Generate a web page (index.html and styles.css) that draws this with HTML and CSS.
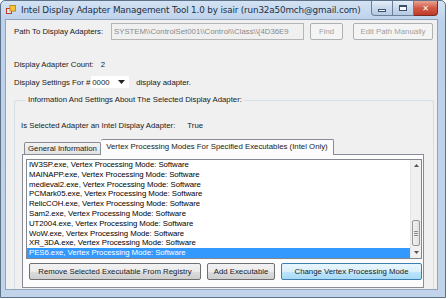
FILE: index.html
```html
<!DOCTYPE html>
<html lang="en">
<head>
  <meta charset="UTF-8" />
  <title>Intel Display Adapter Management Tool</title>
  <link rel="stylesheet" href="styles.css">
</head>
<body>
  <div class="window">
    <div class="titlebar">
      <svg class="appicon" width="10" height="10" viewBox="0 0 10 10">
        <rect x="0.5" y="3.5" width="5" height="5" fill="#e8e8f0" stroke="#c0392b"/>
        <rect x="4" y="0.5" width="5.5" height="5.5" fill="#f5c542" stroke="#c98a10"/>
      </svg>
      <span class="title">Intel Display Adapter Management Tool 1.0 by isair (run32a50mch@gmail.com)</span>
      <div class="controls">
        <div class="ctl min"><span class="dash"></span></div>
        <div class="ctl max"><span class="box"></span></div>
        <div class="ctl close">&#x2715;</div>
      </div>
    </div>

    <div class="client">
      <div class="path-row">
        <span class="path-label">Path To Display Adapters:</span>
        <div class="textbox">SYSTEM\\ControlSet001\\Control\\Class\\{4D36E9</div>
        <button class="btn find-btn" disabled>Find</button>
        <button class="btn edit-btn" disabled>Edit Path Manually</button>
      </div>

      <div class="count-row">
        <span>Display Adapter Count:</span>
        <span class="count">2</span>
      </div>

      <div class="settings-row">
        <span>Display Settings For #</span>
        <div class="combo">
          <span>0000</span>
          <svg width="7" height="4" viewBox="0 0 7 4"><path d="M0 0h7L3.5 4z" fill="#222"/></svg>
        </div>
        <span class="after">display adapter.</span>
      </div>

      <fieldset class="group">
        <legend>Information And Settings About The Selected Display Adapter:</legend>
        <div class="intel-row">
          <span>Is Selected Adapter an Intel Display Adapter:</span>
          <span class="intel-val">True</span>
        </div>

        <div class="tabs">
          <div class="tab">General Information</div>
          <div class="tab active">Vertex Processing Modes For Specified Executables (Intel Only)</div>
        </div>
        <div class="tab-panel">
          <div class="listbox">
            <ul class="items">
              <li>IW3SP.exe, Vertex Processing Mode: Software</li>
              <li>MAINAPP.exe, Vertex Processing Mode: Software</li>
              <li>medieval2.exe, Vertex Processing Mode: Software</li>
              <li>PCMark05.exe, Vertex Processing Mode: Software</li>
              <li>RelicCOH.exe, Vertex Processing Mode: Software</li>
              <li>Sam2.exe, Vertex Processing Mode: Software</li>
              <li>UT2004.exe, Vertex Processing Mode: Software</li>
              <li>WoW.exe, Vertex Processing Mode: Software</li>
              <li>XR_3DA.exe, Vertex Processing Mode: Software</li>
              <li class="selected">PES6.exe, Vertex Processing Mode: Software</li>
            </ul>
            <div class="scrollbar">
              <svg class="arrow" width="5" height="3" viewBox="0 0 5 3"><path d="M0 3L2.5 0 5 3z" fill="#555"/></svg>
              <div class="track">
                <div class="thumb"><span></span><span></span><span></span></div>
              </div>
              <svg class="arrow" width="5" height="3" viewBox="0 0 5 3"><path d="M0 0h5L2.5 3z" fill="#555"/></svg>
            </div>
          </div>
          <div class="actions">
            <button class="btn remove-btn">Remove Selected Executable From Registry</button>
            <button class="btn add-btn">Add Executable</button>
            <button class="btn change-btn">Change Vertex Processing Mode</button>
          </div>
        </div>
      </fieldset>
    </div>
  </div>
</body>
</html>
```

FILE: styles.css
```css
*, *::before, *::after { box-sizing: border-box; }
* {
  margin: 0;
  padding: 0;
}

body {
  width: 448px;
  height: 299px;
  overflow: hidden;
  background: #ffffff;
  font-family: "Liberation Sans", Arial, sans-serif;
  font-size: 7.8px;
  color: #1a1a1a;
}

.window {
  width: 446px;
  height: 298px;
  background: linear-gradient(#d3e2f3, #bcd1ea 20px, #c1d4ea);
  border: 1px solid #5d7189;
  border-radius: 5px 5px 0 0;
  padding: 0 7px 7px 4px;
  display: flex;
  flex-direction: column;
}

.titlebar {
  height: 18px;
  display: flex;
  align-items: center;
  flex-shrink: 0;
}

.appicon { margin: 0 5px 0 1px; }

.title {
  font-family: "DejaVu Sans", sans-serif;
  font-size: 8.8px;
  color: #1e2f45;
  letter-spacing: -0.15px;
}

.controls {
  margin-left: auto;
  display: flex;
  align-self: flex-start;
}

.ctl {
  height: 15px;
  border: 1px solid #6b7f99;
  border-top: none;
  display: flex;
  align-items: center;
  justify-content: center;
}

.min {
  width: 22px;
  border-radius: 0 0 0 4px;
  background: linear-gradient(#e4edf7, #c9d9ec 50%, #b5cae3);
}

.max {
  width: 21px;
  border-left: none;
  background: linear-gradient(#e4edf7, #c9d9ec 50%, #b5cae3);
}

.close {
  width: 24px;
  border-left: none;
  border-color: #7a2a22;
  border-radius: 0 0 4px 0;
  background: linear-gradient(#e9a393, #d05a43 50%, #c0392b);
  color: #ffffff;
  font-family: "DejaVu Sans", sans-serif;
  font-size: 8px;
  font-weight: bold;
}

.dash {
  width: 8px;
  height: 3px;
  background: #f4f7fb;
  border: 1px solid #3b4f69;
  margin-top: 4px;
}

.box {
  width: 8px;
  height: 6px;
  border: 1px solid #3b4f69;
  border-top-width: 2px;
  background: #f4f7fb;
}

.client {
  flex: 1;
  background: #f0f0f0;
  border: 1px solid #8ea3bd;
  padding: 3px 4px 0 8px;
  display: flex;
  flex-direction: column;
  overflow: hidden;
}

.path-row {
  display: flex;
  align-items: center;
  height: 17px;
}

.path-label { width: 97px; }

.textbox {
  width: 193px;
  height: 17px;
  border: 1px solid #b5b5b5;
  background: #f0f0f0;
  color: #8a8a8a;
  padding: 3px 2px 0;
  white-space: nowrap;
  overflow: hidden;
}

.btn {
  height: 17px;
  border: 1px solid #707070;
  border-radius: 2px;
  background: linear-gradient(#f2f2f2, #ebebeb 50%, #dddddd 51%, #cfcfcf);
  font-family: "Liberation Sans", Arial, sans-serif;
  font-size: 7.8px;
  color: #1a1a1a;
}

.btn:disabled {
  background: #f4f4f4;
  border-color: #adb2b5;
  color: #a0a0a0;
}

.find-btn {
  width: 33px;
  margin-left: 6px;
}

.edit-btn {
  width: 80px;
  margin-left: 10px;
}

.count-row {
  margin-top: 20px;
  height: 10px;
  line-height: 10px;
  display: flex;
}

.count { margin-left: 7px; }

.settings-row {
  margin-top: 6px;
  display: flex;
  align-items: center;
  height: 12px;
}

.combo {
  width: 38px;
  height: 12px;
  margin-left: 1px;
  background: #ffffff;
  display: flex;
  align-items: center;
  justify-content: space-between;
  padding: 0 4px 0 1px;
}

.after { margin-left: 7px; }

.group {
  margin-top: 7px;
  width: 420px;
  flex: 1;
  border: 1px solid #d5dfe5;
  border-bottom: none;
  border-radius: 3px 3px 0 0;
  padding: 0 0 0 6px;
}

.group legend {
  margin-left: 5px;
  padding: 0 2px;
  line-height: 10px;
}

.intel-row {
  margin-top: 16px;
  height: 10px;
  line-height: 10px;
  display: flex;
}

.intel-val { margin-left: 12px; }

.tabs {
  margin-top: 8px;
  margin-left: 2px;
  height: 15px;
  display: flex;
  align-items: flex-end;
  position: relative;
  z-index: 1;
}

.tab {
  height: 12px;
  width: 77px;
  border: 1px solid #898c95;
  border-bottom: none;
  border-radius: 2px 2px 0 0;
  background: linear-gradient(#f2f2f2, #e3e3e3);
  text-align: center;
  line-height: 11px;
  margin-left: 1px;
}

.tab.active {
  width: 233px;
  height: 16px;
  margin-bottom: -1px;
  margin-left: 0;
  background: #fcfcfc;
  border-left: none;
  line-height: 14px;
}

.tab-panel {
  margin-left: 1px;
  width: 402px;
  height: 134px;
  border: 1px solid #898c95;
  background: #fcfcfc;
  padding: 4px 1px 0 3px;
}

.listbox {
  height: 100px;
  border: 1px solid #828790;
  background: #ffffff;
  display: flex;
}

.items {
  flex: 1;
  list-style: none;
  font-size: 7.8px;
  color: #000000;
  letter-spacing: -0.05px;
}

.items li {
  height: 9.8px;
  line-height: 9.8px;
  padding-left: 2px;
  white-space: nowrap;
}

.items li.selected {
  background: #3399ff;
  color: #ffffff;
}

.scrollbar {
  width: 11px;
  background: #f0f0f0;
  border-left: 1px solid #e6e6e6;
  display: flex;
  flex-direction: column;
  align-items: center;
  padding: 4px 0;
}

.arrow { flex-shrink: 0; }

.track {
  flex: 1;
  width: 100%;
  display: flex;
  flex-direction: column;
  justify-content: flex-end;
  padding: 0 1px 5px;
}

.thumb {
  height: 26px;
  border: 1px solid #979797;
  border-radius: 2px;
  background: linear-gradient(90deg, #f0f0f0, #e2e2e2);
  display: flex;
  flex-direction: column;
  justify-content: center;
  align-items: center;
  gap: 1px;
}

.thumb span {
  width: 4px;
  height: 1px;
  background: #8a8a8a;
}

.actions {
  display: flex;
  margin-top: 4px;
  padding-left: 3px;
}

.remove-btn { width: 172px; }

.add-btn {
  width: 68px;
  margin-left: 6px;
}

.change-btn {
  width: 141px;
  margin-left: 6px;
  border-color: #3c7fb1;
  background: linear-gradient(#eaf6fd, #d9f0fc 50%, #bee6fd 51%, #a7d9f5);
}
```
